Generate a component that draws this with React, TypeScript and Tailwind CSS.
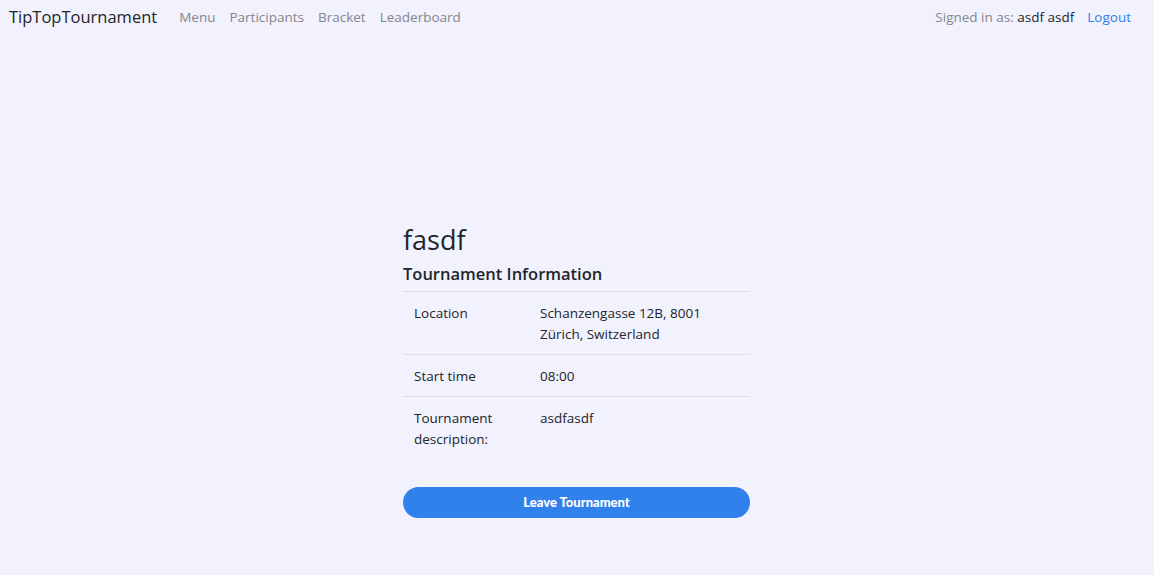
import React from 'react';

const rows = [
  { label: 'Location', value: 'Schanzengasse 12B, 8001 Zürich, Switzerland' },
  { label: 'Start time', value: '08:00' },
  { label: 'Tournament description:', value: 'asdfasdf' },
];

const App = () => {
  return (
    <div className="min-h-[575px] bg-[#f1f2fe] text-[#212529] font-['Open_Sans',sans-serif]">
      <nav className="flex items-center justify-between h-[35px] pl-[9px] pr-[23px]">
        <div className="flex items-center">
          <span className="text-[16.5px] mr-[22px]">TipTopTournament</span>
          <div className="flex items-center gap-[14px] text-[13.5px] text-[#84868c]">
            <a href="#menu">Menu</a>
            <a href="#participants">Participants</a>
            <a href="#bracket">Bracket</a>
            <a href="#leaderboard">Leaderboard</a>
          </div>
        </div>
        <div className="flex items-center text-[13.5px]">
          <span className="text-[#84868c]">
            Signed in as: <span className="text-[#212529]">asdf asdf</span>
          </span>
          <a href="#logout" className="ml-[13px] text-[#2f7fe6]">Logout</a>
        </div>
      </nav>

      <main className="flex justify-center pt-[186px] pr-[1px]">
        <div className="w-[347px]">
          <h1 className="text-[27px] leading-[38px]">fasdf</h1>
          <h2 className="text-[16.5px] font-semibold leading-[26px] mt-[2px] mb-[4px]">Tournament Information</h2>
          <table className="w-full text-[13.5px] leading-[21px] border-collapse">
            <tbody>
              {rows.map((r) => (
                <tr key={r.label} className="border-t border-[#dee0e8]">
                  <td className="w-[137px] px-[11px] pt-[11px] pb-[9px] align-top">{r.label}</td>
                  <td className="pr-[20px] pt-[11px] pb-[9px] align-top">{r.value}</td>
                </tr>
              ))}
            </tbody>
          </table>
          <button className="mt-[28px] w-full h-[31px] rounded-full bg-[#3181ec] text-white text-[13px] font-black font-['Lato',sans-serif]">
            Leave Tournament
          </button>
        </div>
      </main>
    </div>
  );
};

export default App;
